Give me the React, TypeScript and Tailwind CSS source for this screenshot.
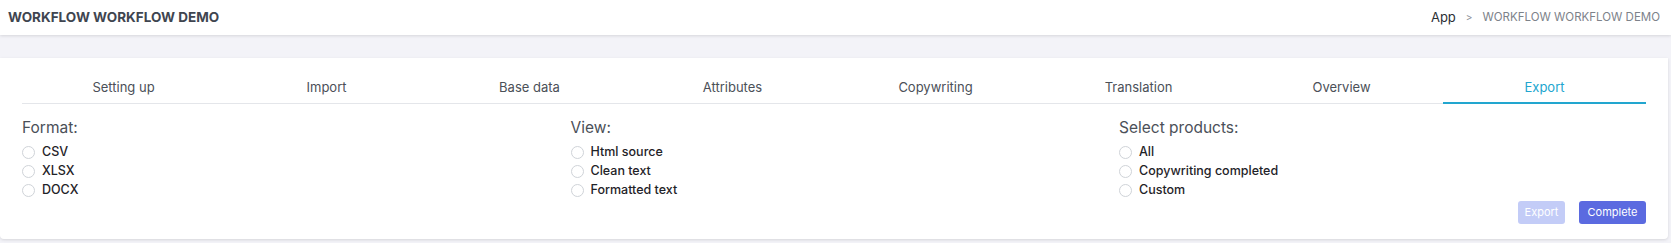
import { useState } from "react";

const tabs = [
  "Setting up",
  "Import",
  "Base data",
  "Attributes",
  "Copywriting",
  "Translation",
  "Overview",
  "Export",
];

const groups = [
  { title: "Format:", options: ["CSV", "XLSX", "DOCX"] },
  { title: "View:", options: ["Html source", "Clean text", "Formatted text"] },
  { title: "Select products:", options: ["All", "Copywriting completed", "Custom"] },
];

function RadioGroup({ title, options }: { title: string; options: string[] }) {
  const [value, setValue] = useState<string | null>(null);
  return (
    <div className="w-[548.5px] shrink-0">
      <div className="mb-[3px] text-[15.5px] leading-[24px] text-[#4b5058]">{title}</div>
      {options.map((o) => (
        <label
          key={o}
          className="flex h-[19px] cursor-pointer items-center gap-[7px] text-[12.5px] font-medium text-[#1f2328]"
          onClick={() => setValue(o)}
        >
          <span
            className={
              value === o
                ? "h-[13px] w-[13px] rounded-full border-4 border-[#5b6ae0] bg-white"
                : "h-[13px] w-[13px] rounded-full border border-[#cfd3d8] bg-white"
            }
          />
          {o}
        </label>
      ))}
    </div>
  );
}

export default function App() {
  const [active, setActive] = useState("Export");

  return (
    <div className="min-h-[243px] bg-[#f3f3f8] font-['Inter',sans-serif]">
      <header className="relative z-10 flex h-[35px] items-center justify-between bg-white px-2 shadow-[0_1px_3px_rgba(0,0,0,0.12)]">
        <div className="text-[13.5px] font-bold text-[#3f4550]">WORKFLOW WORKFLOW DEMO</div>
        <div className="flex items-center gap-[10px] pr-[3px] text-[12px]">
          <span className="text-[13px] text-[#2b2f35]">App</span>
          <span className="text-[10px] text-[#8a8f97]">&gt;</span>
          <span className="text-[11.5px] text-[#7d828a]">WORKFLOW WORKFLOW DEMO</span>
        </div>
      </header>

      <div className="mt-[23px] w-[1668px] rounded-b-[4px] bg-white px-[22px] pt-[15px] pb-[15px] shadow-[0_1px_3px_rgba(0,0,0,0.12)]">
        <div className="flex border-b border-[#e4e6ea]">
          {tabs.map((t) =>
            t === active ? (
              <div
                key={t}
                className="-mb-px flex h-[31px] w-[203px] items-center justify-center border-b-2 border-[#22a6cf] text-[13px] text-[#22a6cf]"
              >
                {t}
              </div>
            ) : (
              <div
                key={t}
                className="flex h-[30px] w-[203px] cursor-pointer items-center justify-center text-[13px] text-[#4b5058]"
                onClick={() => setActive(t)}
              >
                {t}
              </div>
            ),
          )}
        </div>

        <div className="mt-[12px] flex">
          {groups.map((g) => (
            <RadioGroup key={g.title} title={g.title} options={g.options} />
          ))}
        </div>

        <div className="mt-[1px] flex justify-end gap-[14px]">
          <button className="h-[23px] w-[47px] rounded-[3px] bg-[#c3ccf7] text-[11px] text-white">
            Export
          </button>
          <button className="h-[23px] w-[67px] rounded-[3px] bg-[#5b6ae0] text-[11px] text-white">
            Complete
          </button>
        </div>
      </div>
    </div>
  );
}
